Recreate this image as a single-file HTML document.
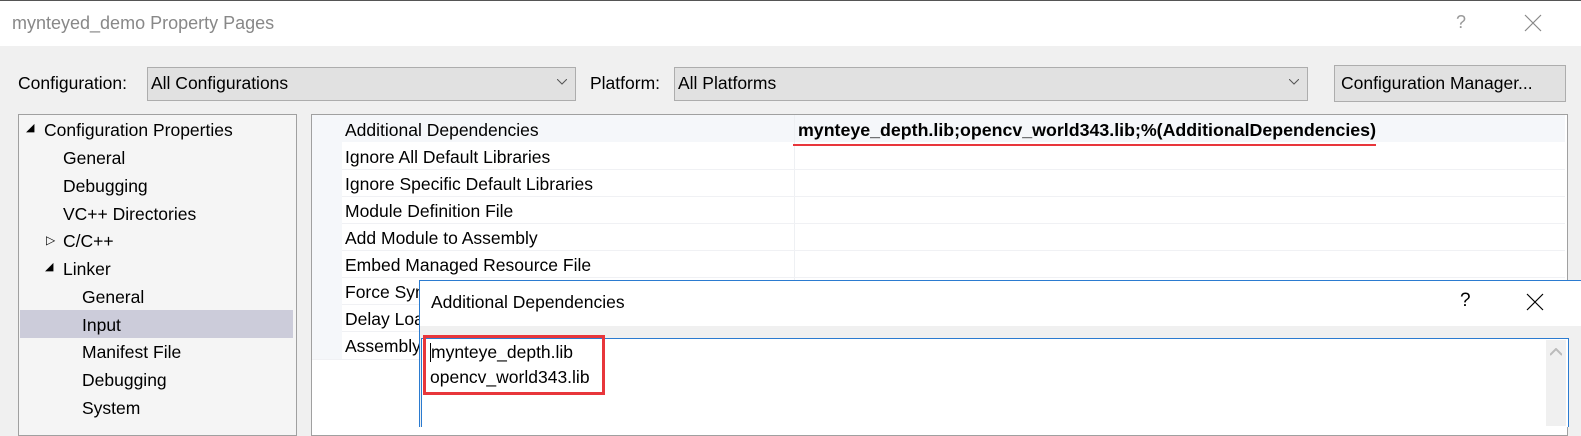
<!DOCTYPE html>
<html><head><style>
body{margin:0;width:1581px;height:426px;overflow:hidden;background:#f0f0f0;font-family:"Liberation Sans",sans-serif;position:relative;color:#000}
.a{position:absolute;white-space:nowrap}
.t{font-size:17.5px}
</style></head><body>
<div class="a" style="left:0;top:0;width:1581px;height:45px;background:#fff;border-top:1px solid #555"></div>
<div class="a t" style="left:12px;top:13px;color:#888;font-size:18px">mynteyed_demo Property Pages</div>
<div class="a" style="left:1456px;top:12px;color:#999;font-size:18px">?</div>
<svg class="a" style="left:1524px;top:14px" width="18" height="18"><path d="M1 1L17 17M17 1L1 17" stroke="#888" stroke-width="1.2"/></svg>

<div class="a t" style="left:18px;top:73px">Configuration:</div>
<div class="a" style="left:147px;top:67px;width:427px;height:32px;background:#e1e1e1;border:1px solid #adadad"></div>
<div class="a t" style="left:151px;top:73px">All Configurations</div>
<svg class="a" style="left:557px;top:79px" width="10" height="6"><path d="M0 0L5 5L10 0" stroke="#555" fill="none"/></svg>
<div class="a t" style="left:590px;top:73px">Platform:</div>
<div class="a" style="left:674px;top:67px;width:632px;height:32px;background:#e1e1e1;border:1px solid #adadad"></div>
<div class="a t" style="left:678px;top:73px">All Platforms</div>
<svg class="a" style="left:1289px;top:79px" width="10" height="6"><path d="M0 0L5 5L10 0" stroke="#555" fill="none"/></svg>
<div class="a" style="left:1334px;top:65px;width:230px;height:35px;background:#e1e1e1;border:1px solid #adadad"></div>
<div class="a t" style="left:1341px;top:73px">Configuration Manager...</div>

<div class="a" style="left:18px;top:114px;width:277px;height:320px;background:#f5f5f5;border:1px solid #a0a0a0"></div>
<div class="a" style="left:20px;top:310px;width:273px;height:28px;background:#ccccda"></div>
<div class="a t" style="left:26px;top:121px;font-size:11px">◢</div>
<div class="a t" style="left:44px;top:120px">Configuration Properties</div>
<div class="a t" style="left:63px;top:148px">General</div>
<div class="a t" style="left:63px;top:176px">Debugging</div>
<div class="a t" style="left:63px;top:204px">VC++ Directories</div>
<div class="a t" style="left:46px;top:233px;font-size:12px">▷</div>
<div class="a t" style="left:63px;top:231px">C/C++</div>
<div class="a t" style="left:45px;top:260px;font-size:11px">◢</div>
<div class="a t" style="left:63px;top:259px">Linker</div>
<div class="a t" style="left:82px;top:287px">General</div>
<div class="a t" style="left:82px;top:315px">Input</div>
<div class="a t" style="left:82px;top:342px">Manifest File</div>
<div class="a t" style="left:82px;top:370px">Debugging</div>
<div class="a t" style="left:82px;top:398px">System</div>

<div class="a" style="left:311px;top:114px;width:1255px;height:320px;background:#fff;border:1px solid #a0a0a0"></div>
<div class="a" style="left:312px;top:115px;width:30px;height:244px;background:#f5f7fa"></div>
<div class="a" style="left:342px;top:115px;width:1223px;height:27px;background:#f5f7fa"></div>
<div class="a" style="left:794px;top:115px;width:1px;height:244px;background:#eef0f3"></div>
<div class="a" style="left:342px;top:169px;width:1223px;height:1px;background:#f0f1f4"></div>
<div class="a" style="left:342px;top:196px;width:1223px;height:1px;background:#f0f1f4"></div>
<div class="a" style="left:342px;top:223px;width:1223px;height:1px;background:#f0f1f4"></div>
<div class="a" style="left:342px;top:250px;width:1223px;height:1px;background:#f0f1f4"></div>
<div class="a" style="left:342px;top:277px;width:1223px;height:1px;background:#f0f1f4"></div>
<div class="a" style="left:342px;top:304px;width:80px;height:1px;background:#f0f1f4"></div>
<div class="a" style="left:342px;top:331px;width:80px;height:1px;background:#f0f1f4"></div>
<div class="a" style="left:312px;top:359px;width:110px;height:1px;background:#f0f1f4"></div>
<div class="a t" style="left:345px;top:120px">Additional Dependencies</div>
<div class="a t" style="left:345px;top:147px">Ignore All Default Libraries</div>
<div class="a t" style="left:345px;top:174px">Ignore Specific Default Libraries</div>
<div class="a t" style="left:345px;top:201px">Module Definition File</div>
<div class="a t" style="left:345px;top:228px">Add Module to Assembly</div>
<div class="a t" style="left:345px;top:255px">Embed Managed Resource File</div>
<div class="a t" style="left:345px;top:282px">Force Symbol</div>
<div class="a t" style="left:345px;top:309px">Delay Loaded</div>
<div class="a t" style="left:345px;top:336px">Assembly</div>
<div class="a t" style="left:798px;top:120px;font-weight:bold;font-size:17.8px">mynteye_depth.lib;opencv_world343.lib;%(AdditionalDependencies)</div>
<div class="a" style="left:793px;top:144px;width:583px;height:2px;background:#e8363b"></div>

<div class="a" style="left:419px;top:280px;width:1162px;height:146px;background:#f0f0f0;border-left:1px solid #2b7bd0;border-top:1px solid #2b7bd0"></div>
<div class="a" style="left:420px;top:281px;width:1161px;height:45px;background:#fff"></div>
<div class="a t" style="left:431px;top:292px">Additional Dependencies</div>
<div class="a" style="left:1460px;top:290px;font-size:19px">?</div>
<svg class="a" style="left:1526px;top:293px" width="18" height="18"><path d="M1 1L17 17M17 1L1 17" stroke="#000" stroke-width="1.2"/></svg>
<div class="a" style="left:421px;top:338px;width:1146px;height:88px;background:#fff;border:1px solid #2b7bd0;border-bottom:none"></div>
<div class="a" style="left:1546px;top:340px;width:20px;height:86px;background:#f0f0f0"></div>
<svg class="a" style="left:1550px;top:348px" width="12" height="8"><path d="M0 7L6 1L12 7" stroke="#bbb" stroke-width="2" fill="none"/></svg>
<div class="a" style="left:423px;top:335px;width:176px;height:54px;border:3px solid #e8363b"></div>
<div class="a" style="left:430px;top:343px;width:1px;height:19px;background:#000"></div>
<div class="a t" style="left:431px;top:342px">mynteye_depth.lib</div>
<div class="a t" style="left:430px;top:367px">opencv_world343.lib</div>
</body></html>
